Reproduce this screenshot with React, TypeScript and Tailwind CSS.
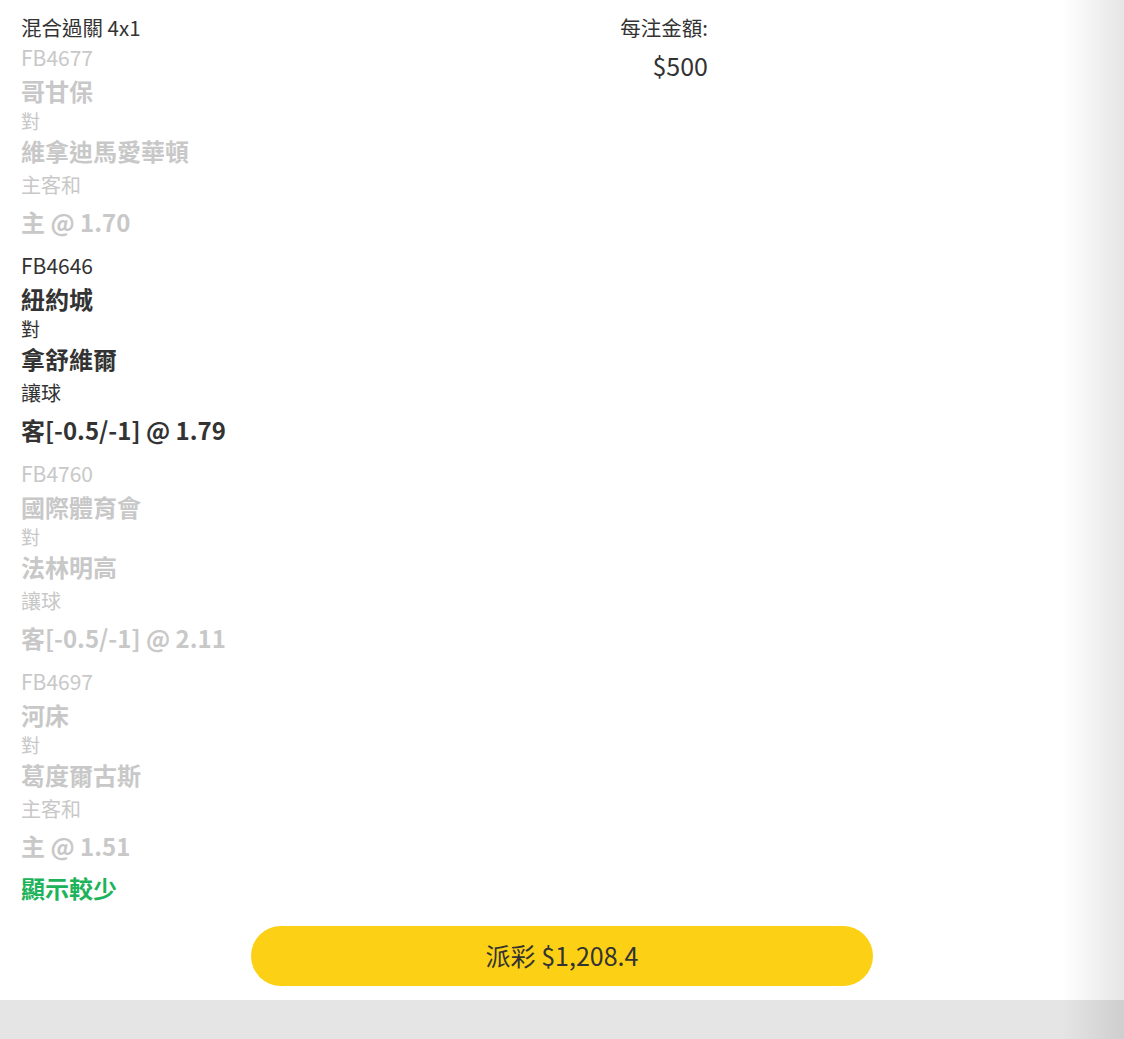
const font = { fontFamily: '"Noto Sans CJK TC", "Noto Sans", sans-serif' }

const legs = [
  { code: 'FB4677', home: '哥甘保', away: '維拿迪馬愛華頓', type: '主客和', pick: '主 @ 1.70', active: false },
  { code: 'FB4646', home: '紐約城', away: '拿舒維爾', type: '讓球', pick: '客[-0.5/-1] @ 1.79', active: true },
  { code: 'FB4760', home: '國際體育會', away: '法林明高', type: '讓球', pick: '客[-0.5/-1] @ 2.11', active: false },
  { code: 'FB4697', home: '河床', away: '葛度爾古斯', type: '主客和', pick: '主 @ 1.51', active: false },
]

function Leg({ leg }: { leg: (typeof legs)[number] }) {
  const c = leg.active ? 'text-[#333333]' : 'text-[#c8c8c8]'
  return (
    <div className={`mb-[6px] ${c}`}>
      <div className="text-[21px] leading-[30px]">{leg.code}</div>
      <div className="text-[24px] leading-[38px] font-bold">{leg.home}</div>
      <div className="text-[19px] leading-[22px]">對</div>
      <div className="text-[24px] leading-[38px] font-bold">{leg.away}</div>
      <div className="text-[20px] leading-[30px]">{leg.type}</div>
      <div className="text-[24px] leading-[44px] font-bold">{leg.pick}</div>
    </div>
  )
}

export default function App() {
  return (
    <div className="relative min-h-[1039px] w-[1124px] bg-[#e5e5e5] overflow-hidden" style={font}>
      <div className="bg-white pt-[12px] pb-[14px]">
        <div className="flex pl-[21px]">
          <div className="w-[599px]">
            <div className="text-[20.5px] leading-[30px] text-[#333333]">混合過關 4x1</div>
            {legs.map((leg) => (
              <Leg key={leg.code} leg={leg} />
            ))}
            <div className="text-[24px] leading-[28px] font-bold text-[#1db35b]">顯示較少</div>
          </div>
          <div className="flex flex-col items-end w-[88px] text-[#333333]">
            <div className="text-[20.5px] leading-[30px] whitespace-nowrap">每注金額:</div>
            <div className="mt-[8px] text-[25px] leading-[30px]">$500</div>
          </div>
        </div>
        <div className="mt-[24px] flex justify-center">
          <button className="w-[622px] h-[60px] rounded-full bg-[#fcd015] text-[25px] text-[#333333]">
            派彩 $1,208.4
          </button>
        </div>
      </div>
      <div className="pointer-events-none absolute top-0 right-0 h-full w-[62px] bg-gradient-to-r from-transparent to-black/10" />
    </div>
  )
}
